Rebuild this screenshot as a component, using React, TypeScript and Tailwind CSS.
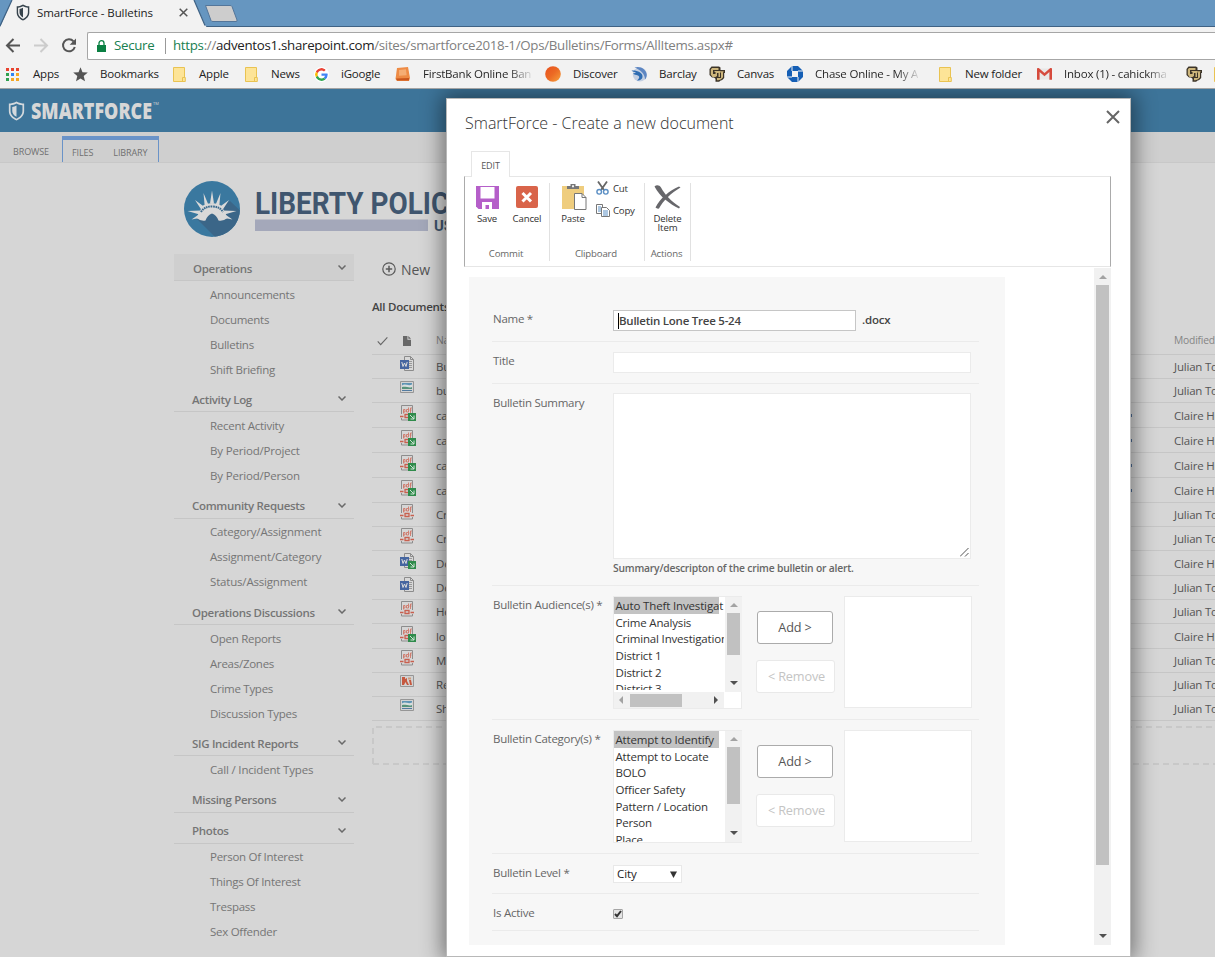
import React from "react";

const UI = "font-['Open_Sans','Noto_Sans',sans-serif]";

function Shield({ className, fill, bg }: { className: string; fill: string; bg: string }) {
  return (
    <svg viewBox="0 0 16 18" className={className} preserveAspectRatio="none">
      <path d="M8 .5C5.500 2 3 2.300 .8 2.300V9c0 4.200 3.200 6.800 7.200 8.600C12 15.800 15.200 13.200 15.200 9V2.300C13 2.300 10.500 2 8 .5z" fill={fill} />
      <path d="M8 2.300c-1.800 1-3.700 1.500-5.600 1.600V9c0 3.200 2.300 5.300 5.600 6.900 3.300-1.600 5.600-3.700 5.600-6.900V3.900C11.700 3.800 9.800 3.300 8 2.300z" fill={bg} />
      <path d="M8 4c-1.300.7-2.700 1.100-4 1.300V9c0 2.400 1.500 3.900 4 5.200z" fill={fill} />
    </svg>
  );
}

function Folder() {
  return (
    <svg viewBox="0 0 13 15" className="h-[15px] w-[13px]">
      <path d="M.5.5h11v10h.8v4H.5z" fill="#fde497" stroke="#e9c352" />
      <path d="M9.500 14v-3.500h2.500" fill="none" stroke="#e9c352" />
    </svg>
  );
}

function AppsGrid() {
  const colors = ["#e8432f", "#e8432f", "#e8432f", "#2fa14f", "#2e83f2", "#f5a623", "#2fa14f", "#f5a623", "#f5a623"];
  return (
    <div className="grid w-[13px] grid-cols-3 gap-[2px]">
      {colors.map((c, i) => (
        <div key={i} className="h-[3px] w-[3px]" style={{ background: c }} />
      ))}
    </div>
  );
}

function Buffalo() {
  return (
    <svg viewBox="0 0 16 16" className="h-4 w-4">
      <path d="M2.500.5h7.500l1.500 1v2.500H16v3h-.8v5l-2 2-2 .8-1 1H6.500v-3L5 11.500H3l-2.500-2.500V3z" fill="#3c3428" />
      <path d="M3 2h6.500v2H4v4h2.500V6H5.500V5H11v6H9.500V7H8v3L6.500 11H3.500L1.800 8.500V3.500zM8 12h4V6.500h-1V5.300h3.500v1H14v5L12.200 13.300 9.500 14.200H8z" fill="#cdb67c" />
    </svg>
  );
}

const GoogleG = () => (
  <svg viewBox="0 0 48 48" className="h-[15px] w-[15px] rounded-full bg-white p-[1px]">
    <path fill="#EA4335" d="M24 9.500c3.500 0 6.700 1.200 9.200 3.600l6.900-6.900C35.900 2.400 30.500 0 24 0 14.600 0 6.500 5.400 2.600 13.200l8 6.200C12.400 13.700 17.700 9.500 24 9.500z" />
    <path fill="#4285F4" d="M47 24.600c0-1.600-.2-3.100-.4-4.600H24v9h12.900c-.6 3-2.200 5.500-4.700 7.200l7.700 6C44.400 38 47 31.800 47 24.600z" />
    <path fill="#FBBC05" d="M10.500 28.600c-.5-1.500-.8-3-.8-4.600s.3-3.100.8-4.600l-8-6.200C.9 16.500 0 20.100 0 24s.9 7.500 2.600 10.800z" />
    <path fill="#34A853" d="M24 48c6.500 0 11.900-2.100 15.900-5.800l-7.700-6c-2.200 1.500-4.900 2.300-8.200 2.300-6.300 0-11.600-4.200-13.500-9.900l-8 6.200C6.500 42.600 14.600 48 24 48z" />
  </svg>
);

const Star = () => (
  <svg viewBox="0 0 15 15" className="h-[15px] w-[15px]">
    <path d="M7.500.3l2 4.900 5.300.4-4.100 3.400 1.300 5.200-4.500-2.800L3 14.200 4.300 9 .2 5.600l5.300-.4z" fill="#545454" />
  </svg>
);

const OrangeBook = () => (
  <svg viewBox="0 0 16 16" className="h-4 w-4">
    <path d="M2 2l11-1 2 11-1 3H2L.5 13z" fill="#ee8b45" />
    <path d="M1 12.500l13-.5v2.500H2z" fill="#c9561d" />
    <path d="M4 4l7-.7.6 6-7.600.4z" fill="#f5ad74" />
  </svg>
);

const Discover = () => (
  <svg viewBox="0 0 16 16" className="h-4 w-4">
    <defs>
      <linearGradient id="dg" x1="0" y1="0" x2="1" y2="1">
        <stop offset="0" stopColor="#e8501f" />
        <stop offset=".5" stopColor="#ec6a24" />
        <stop offset="1" stopColor="#f7a23c" />
      </linearGradient>
    </defs>
    <circle cx="8" cy="8" r="7.800" fill="url(#dg)" />
  </svg>
);

const Barclay = () => (
  <svg viewBox="0 0 16 16" className="h-4 w-4">
    <circle cx="8.800" cy="8.500" r="7" fill="#c3cfe2" />
    <path d="M3.500 1.500C9-.5 15.500 3 15.800 9c-.2 2-.8 3.500-1.800 4.500C14 8 10 4 3.500 1.500z" fill="#5d86c2" />
    <path d="M.5 4.500C6 4 12 6.500 11.500 11c-.3 2.500-3 4-5.500 3.500C8.500 12.500 9 10.500 7 9.500 5 9 3 8.500 2 7.500 3.500 7.300 4.500 7 5 6.500 3 6 1.500 5.500.5 4.500z" fill="#2f6db2" />
  </svg>
);

const Chase = () => (
  <svg viewBox="0 0 16 16" className="h-4 w-4">
    <path d="M5 0h6l5 5v6l-5 5H5l-5-5V5z" fill="#155fb5" />
    <path d="M5 5h6v6H5z" fill="#f2f2f2" />
    <path d="M5 0v5M16 5h-5M11 16v-5M0 11h5" stroke="#f2f2f2" strokeWidth="1" />
  </svg>
);

const Gmail = () => (
  <svg viewBox="0 0 15 12" className="h-3 w-[15px]">
    <path d="M1 .5h13v11H1z" fill="#e9e7e6" />
    <path d="M0 1c0-1 1-1 2-.8L7.500 5 13 .2c1-.2 2-.2 2 .8v10.700h-2.600V4L7.500 8.300 2.600 4v7.700H0z" fill="#d64a3c" />
  </svg>
);

const bookmarks: { w: string; pad: string; icon: React.ReactNode; label: string; fade?: boolean }[] = [
  { w: "w-[67px]", pad: "w-[27px]", icon: <AppsGrid />, label: "Apps" },
  { w: "w-[100px]", pad: "w-[27px]", icon: <Star />, label: "Bookmarks" },
  { w: "w-[72px]", pad: "w-[26px]", icon: <Folder />, label: "Apple" },
  { w: "w-[69px]", pad: "w-[26px]", icon: <Folder />, label: "News" },
  { w: "w-[81px]", pad: "w-[27px]", icon: <GoogleG />, label: "iGoogle" },
  { w: "w-[150px]", pad: "w-[28px]", icon: <OrangeBook />, label: "FirstBank Online Ban", fade: true },
  { w: "w-[86px]", pad: "w-[28px]", icon: <Discover />, label: "Discover" },
  { w: "w-[78px]", pad: "w-[28px]", icon: <Barclay />, label: "Barclay" },
  { w: "w-[78px]", pad: "w-[28px]", icon: <Buffalo />, label: "Canvas" },
  { w: "w-[152px]", pad: "w-[28px]", icon: <Chase />, label: "Chase Online - My A", fade: true },
  { w: "w-[98px]", pad: "w-[26px]", icon: <Folder />, label: "New folder" },
  { w: "w-[149px]", pad: "w-[27px]", icon: <Gmail />, label: "Inbox (1) - cahickma", fade: true },
  { w: "w-[28px]", pad: "w-[28px]", icon: <Buffalo />, label: "" },
  { w: "w-[20px]", pad: "w-[20px]", icon: <Folder />, label: "" },
];

function Chrome() {
  return (
    <header className="h-[89px] shrink-0 border-b border-[#a3a3a3] bg-[#f2f2f2]">
      <div className="relative h-[27px] border-b border-[#3f6284] bg-[#6696c0]">
        <svg viewBox="0 0 250 27" className="absolute left-0 top-0 h-[27px] w-[250px]">
          <path d="M0 27L1 25 12 0h182l11 25 1.500 2z" fill="#f2f2f2" />
          <path d="M0 26L12 0M194 0l11 25.500" fill="none" stroke="#3f6284" strokeWidth="1.200" />
          <path d="M205.500 5.500h24.500q1.500 0 2 1l5 13.500q.5 1.500-1 1.500h-23q-1.500 0-2-1l-5.500-15z" fill="#cdcdcd" stroke="#54769a" />
        </svg>
        <div className="relative flex h-[25px] items-center pl-4">
          <Shield className="h-[17px] w-[14px]" fill="#36434c" bg="#f2f2f2" />
          <span className="ml-[7px] w-[142px] text-[11.5px] tracking-[-0.08px] text-[#222]">SmartForce - Bulletins</span>
          <svg viewBox="0 0 9 9" className="h-[9px] w-[9px]" stroke="#555" strokeWidth="1.500">
            <path d="M.7.7l7.600 7.600M8.300.7L.7 8.300" />
          </svg>
        </div>
      </div>
      <div className="flex h-[37px] items-center">
        <svg viewBox="0 0 87 29" className="h-[29px] w-[87px] shrink-0" fill="none" strokeWidth="2">
          <path d="M20 14.500H7.500M13.500 8l-6.500 6.500 6.500 6.500" stroke="#555" />
          <path d="M34 14.500h12.500M40.500 8l6.500 6.500-6.500 6.500" stroke="#ccc" />
          <path d="M73.500 10.300a6 6 0 1 0 1.300 5.700" stroke="#555" />
          <path d="M76 7.500v6.300h-6.300z" fill="#555" />
        </svg>
        <div className="flex h-[28px] flex-1 items-center rounded-l-[2px] border border-r-0 border-[#a6a6a6] bg-white">
          <svg viewBox="0 0 9 12" className="ml-[9px] h-3 w-[9px]">
            <path d="M0 5h9v7H0z" fill="#0b8043" />
            <path d="M2 5V3a2.500 2.300 0 0 1 5 0v2" fill="none" stroke="#0b8043" strokeWidth="1.300" />
          </svg>
          <span className="ml-[8px] w-[51px] text-[13.3px] tracking-[-0.3px] text-[#188050]">Secure</span>
          <span className="h-4 w-px bg-[#999]" />
          <span className="ml-[7px] whitespace-nowrap text-[13.3px] tracking-[-0.295px] text-[#808080]">
            <span className="text-[#188050]">https</span>://<span className="text-[#222]">adventos1.sharepoint.com</span>/sites/smartforce2018-1/Ops/Bulletins/Forms/AllItems.aspx#
          </span>
        </div>
      </div>
      <div className="flex h-[20px] items-center overflow-hidden pl-[6px]">
        {bookmarks.map((b, i) => (
          <div key={i} className={`flex shrink-0 items-center ${b.w}`}>
            <div className={`shrink-0 ${b.pad}`}>{b.icon}</div>
            <span
              className={`whitespace-nowrap text-[11.5px] tracking-[-0.2px] text-[#222] ${
                b.fade ? "bg-[linear-gradient(90deg,#222_80%,#2222_100%)] bg-clip-text text-transparent" : ""
              }`}
            >
              {b.label}
            </span>
          </div>
        ))}
      </div>
    </header>
  );
}

const nav = [
  { t: "Operations", h: "h-[27px] bg-[#cfcfcf] pl-[19px]", list: "pt-px", items: ["Announcements", "Documents", "Bulletins", "Shift Briefing"] },
  { t: "Activity Log", h: "h-[30px] pl-[18px]", list: "pt-px", items: ["Recent Activity", "By Period/Project", "By Period/Person"] },
  { t: "Community Requests", h: "h-[31px] pl-[18px]", list: "pb-px", items: ["Category/Assignment", "Assignment/Category", "Status/Assignment"] },
  { t: "Operations Discussions", h: "h-[30px] pl-[18px]", list: "pt-px", items: ["Open Reports", "Areas/Zones", "Crime Types", "Discussion Types"] },
  { t: "SIG Incident Reports", h: "h-[30px] pl-[18px]", list: "pt-px", items: ["Call / Incident Types"] },
  { t: "Missing Persons", h: "h-[31px] pl-[18px]", list: "", items: [] },
  { t: "Photos", h: "h-[31px] pl-[18px]", list: "", items: ["Person Of Interest", "Things Of Interest", "Trespass", "Sex Offender"] },
];

function Sidebar() {
  return (
    <nav className="w-[180px] shrink-0 text-[#757575]">
      {nav.map((s) => (
        <section key={s.t}>
          <div className={`flex items-end justify-between border-b border-[#c6c6c6] pr-2 ${s.h}`}>
            <span className={`text-[11.5px] font-semibold leading-[18px] tracking-[-0.32px] ${s.h.startsWith("h-[31px]") ? "pb-[3px]" : "pb-[2px]"}`}>{s.t}</span>
            <svg viewBox="0 0 8 5" className="mb-[10px] h-[5px] w-2" fill="none" stroke="#6a6a6a" strokeWidth="1.500">
              <path d="M.5.5L4 4 7.500.5" />
            </svg>
          </div>
          {s.items.length > 0 && (
            <ul className={s.list}>
              {s.items.map((i) => (
                <li key={i} className={`h-[25px] pl-9 text-[11.5px] leading-[25px] ${i.includes("/") && i !== "Areas/Zones" ? "tracking-[-0.18px]" : "tracking-[-0.27px]"}`}>{i}</li>
              ))}
            </ul>
          )}
        </section>
      ))}
    </nav>
  );
}

function FileIcon({ kind }: { kind: string }) {
  const shared = kind.endsWith("+");
  const k = kind.replace("+", "");
  return (
    <svg viewBox="0 0 16 16" className="h-4 w-4">
      {k === "pdf" && (
        <g fill="none">
          <path d="M1.500 9V.5h11V9M1.500 13v2h11v-2" stroke="#8d8d8d" />
          <path d="M3.500 8.500V4.500h1.500V7H3.500M8.500 2.500V7H6.500V4.500H8M10.500 8V3h1.500M9.500 5h2" stroke="#cf7668" strokeWidth=".9" />
          <path d="M0 11.500h3.500M5 9.500h4v3H5zM10.500 11.500h3.500" stroke="#c8604f" strokeWidth="1.300" />
        </g>
      )}
      {k === "word" && (
        <g>
          <path d="M4.500.5h6l3 3v11h-9z" fill="#d8d8d8" stroke="#8c8c8c" />
          <path d="M10.500.5v3h3" fill="none" stroke="#8c8c8c" />
          <path d="M9 5.500h3M9 7.500h3M9 9.500h3M9 11.500h3" stroke="#999" />
          <path d="M0 4h9v9H0z" fill="#4565a0" />
          <path d="M1.800 6l1.200 4.500L4.500 7 6 10.500 7.200 6" fill="none" stroke="#dcdcdc" />
        </g>
      )}
      {k === "img" && (
        <g>
          <path d="M.5 1.500h13v11H.5z" fill="#d2d2d2" stroke="#969696" />
          <path d="M2 3h10v4H2z" fill="#5f94b4" />
          <path d="M2 5.500c3-2.500 6 1 10-1v4H2z" fill="#d8dede" />
          <path d="M2 7c4-1 7 1.500 10 0v2H2z" fill="#57927a" />
          <path d="M2 10.500h10" stroke="#527ba0" />
        </g>
      )}
      {k === "ppt" && (
        <g>
          <path d="M.5 1.500h13v11H.5z" fill="#d2d2d2" stroke="#969696" />
          <path d="M2 3h3v2l2-1v3l2 4H7L5.500 8 4 11H2z" fill="#c5583f" />
          <path d="M8 3.500h3v2H8z" fill="#cf9b7c" />
          <path d="M9 6h2l1 5h-2z" fill="#c5583f" />
        </g>
      )}
      {shared && (
        <g>
          <path d="M8 8h8v8H8z" fill="#2f8b4b" />
          <path d="M10 10l4 4M14 10.500V14h-3.500" stroke="#cfe3d5" fill="none" />
        </g>
      )}
    </svg>
  );
}

const J = "Julian Torres";
const C = "Claire Hickman";
const files: [string, string, string, string][] = [
  ["h-[24px]", "word", "Bulletin", J],
  ["h-[24px]", "img", "bulletin", J],
  ["h-[25px]", "pdf+", "case", C],
  ["h-[25px]", "pdf+", "case", C],
  ["h-[25px]", "pdf+", "case", C],
  ["h-[25px]", "pdf+", "case", C],
  ["h-[24px]", "pdf", "Crime", J],
  ["h-[24px]", "pdf", "Crime", J],
  ["h-[25px]", "word+", "Document", C],
  ["h-[24px]", "word", "Document", J],
  ["h-[24px]", "pdf", "Homes", J],
  ["h-[25px]", "pdf+", "lone", C],
  ["h-[24px]", "pdf", "Memo", J],
  ["h-[24px]", "ppt", "Report", J],
  ["h-[24px]", "img", "Shift", J],
];

function Library() {
  return (
    <main className="ml-[18px] w-[843px] shrink-0">
      <div className="flex h-[30px] items-center gap-[5px] pl-[10px] text-[14px] tracking-[-0.1px] text-[#555]">
        <svg viewBox="0 0 14 14" className="h-[14px] w-[14px]" fill="none" stroke="#5a5a5a" strokeWidth="1.200">
          <circle cx="7" cy="7" r="6.200" />
          <path d="M7 3.800v6.400M3.800 7h6.400" strokeWidth="1.500" />
        </svg>
        New
      </div>
      <div className="flex h-[43px] items-center whitespace-nowrap pt-[2px] text-[11.500px] font-semibold tracking-[-0.25px] text-[#444]">All Documents</div>
      <div className="flex h-[28px] items-center border-b border-[#c6c6c6] text-[10.3px] text-[#858585]">
        <svg viewBox="0 0 12 10" className="ml-[5px] h-[10px] w-[11px]" fill="none" stroke="#666" strokeWidth="1.200">
          <path d="M.8 5.500L4 9l7.300-8" />
        </svg>
        <svg viewBox="0 0 9 11" className="ml-[15px] h-[10px] w-[8px]">
          <path d="M0 0h5v4h4v7H0zM6 0l3 3H6z" fill="#686868" />
        </svg>
        <span className="ml-[25px] w-[738px] shrink-0 tracking-[-0.2px]">Name</span>
        <span className="shrink-0 tracking-[-0.2px]">Modified</span>
      </div>
      {files.map(([h, kind, name, by], i) => (
        <div key={i} className={`flex items-center whitespace-nowrap border-b border-[#c6c6c6] text-[11.5px] tracking-[-0.2px] text-[#555] ${h}`}>
          <span className="mb-[5px] ml-[28px] w-[36px] shrink-0">
            <FileIcon kind={kind} />
          </span>
          <span className="w-[695px] shrink-0 pt-px">{name}</span>
          <span className={`h-[3px] w-[1px] shrink-0 ${kind === "pdf+" && i < 6 ? "bg-[#4a6a94]" : ""}`} />
          <span className="ml-[42px] shrink-0 pt-px">{by}</span>
        </div>
      ))}
      <svg className="mt-[5px] h-[39px] w-full" viewBox="0 0 843 39">
        <path d="M1 38V1h842M1 38h842" fill="none" stroke="#c8c8c8" strokeWidth="2" strokeDasharray="6 4" />
      </svg>
    </main>
  );
}

function LibertyLogo() {
  return (
    <svg viewBox="0 0 300 58" className="ml-[183px] h-[58px] w-[300px]">
      <defs>
        <clipPath id="disc"><circle cx="29" cy="28" r="28" /></clipPath>
      </defs>
      <circle cx="29" cy="28" r="28" fill="#3a789f" />
      <g clipPath="url(#disc)">
        <path d="M14 38l20 20h30V36L47 20 29 31z" fill="#3b6688" />
      </g>
      <g fill="#d9d9d9">
        <path d="M29 9.500l2 13h-4zM20.500 12l4.800 11.500-3.600 1.500zM37.500 12l-4.800 11.500 3.600 1.500zM12 19l9.500 7-3 3zM46 19l-9.500 7 3 3zM4.500 30l13.500-.5-1.500 4zM53.500 30l-13.500-.5 1.500 4zM8.500 38.500l8-5.500v4zM49.500 38.500l-8-5.500v4z" />
        <path d="M20 24.500q9-5 18 0l3.500 6 3 6.500q-4.500 3.500-9 2.500-2-5.500-6.500-7-4.500 1.500-6.500 7-4.500 1-9-2.500l3-6.500z" />
      </g>
      <path d="M18 31q3-5.500 11-5.500t11 5.500" fill="none" stroke="#3a6a8e" strokeWidth="2" strokeDasharray="1.600 .7" />
      <text x="72" y="33" fontFamily="Roboto" fontWeight="700" fontSize="32" fill="#40566f" textLength="210" lengthAdjust="spacingAndGlyphs">LIBERTY POLICE</text>
      <path d="M72 38.500h173v11.500H72z" fill="#a4a8ba" />
      <text x="251" y="50" fontFamily="Roboto" fontWeight="700" fontSize="15.500" fill="#40566f" textLength="29" lengthAdjust="spacingAndGlyphs">USA</text>
    </svg>
  );
}

function RibbonButton({ icon, label, className }: { icon: React.ReactNode; label: React.ReactNode; className: string }) {
  return (
    <div className={`flex flex-col items-center text-center text-[9.6px] leading-[9px] tracking-[-0.15px] text-[#333] ${className}`}>
      <div className="flex h-[28px] items-center">{icon}</div>
      <div className="pt-[3px]">{label}</div>
    </div>
  );
}

function RibbonGroup({ w, label, children }: { w: string; label: string; children: React.ReactNode }) {
  return (
    <div className={`flex h-[78px] flex-col justify-between border-r border-[#e1e1e1] ${w}`}>
      <div className="flex">{children}</div>
      <div className="pb-px pr-[2px] text-center text-[9.6px] leading-[12px] tracking-[-0.15px] text-[#666]">{label}</div>
    </div>
  );
}

function Ribbon() {
  return (
    <div className="mt-[9px]">
      <div className="relative z-10 ml-[7px] flex h-[26px] w-[39px] items-center justify-center border border-b-0 border-[#e6e6e6] bg-white pt-[2px] text-[9px] tracking-[-0.1px] text-[#555]">EDIT</div>
      <div className="-mt-px flex h-[91px] items-start border border-x-[#ababab] border-y-[#e6e6e6] pt-[6px]">
        <RibbonGroup w="w-[85px]" label="Commit">
          <RibbonButton
            className="ml-[6px] w-[32px]"
            label="Save"
            icon={
              <svg viewBox="0 0 23 23" className="h-[23px] w-[23px]">
                <path d="M0 0h23v23H2.500L0 20.500z" fill="#b55fc9" />
                <path d="M4.500 1h14v11.500h-14zM6 16h10v7h-3v-4H9.500v4H6z" fill="#fff" />
              </svg>
            }
          />
          <RibbonButton
            className="ml-[6px] w-[36px]"
            label="Cancel"
            icon={
              <svg viewBox="0 0 22 22" className="h-[22px] w-[22px]">
                <rect width="22" height="22" rx="2" fill="#d9644a" />
                <path d="M6.500 7l8.500 8.500M15 7l-8.500 8.500" stroke="#fff" strokeWidth="3" />
              </svg>
            }
          />
        </RibbonGroup>
        <RibbonGroup w="w-[95px]" label="Clipboard">
          <RibbonButton
            className="ml-[9px] w-[28px]"
            label="Paste"
            icon={
              <svg viewBox="0 0 26 28" className="-mr-[2px] h-[28px] w-[26px] shrink-0">
                <path d="M1 3h22v23H1z" fill="#efcd7e" />
                <path d="M6 6V3h3.500V1h5v2H18v3z" fill="#777" />
                <path d="M11 2.300h2v2h-2z" fill="#eee" />
                <path d="M13.500 10.500h7.500l4 4v12H13.500z" fill="#fff" stroke="#777" />
                <path d="M21 10.500v4h4" fill="none" stroke="#777" />
              </svg>
            }
          />
          <div className="ml-[9px] flex flex-col gap-[9px] whitespace-nowrap text-[9.7px] leading-[13px] tracking-[-0.25px] text-[#333]">
            <div className="-mt-[2px] flex items-center gap-[4px]">
              <svg viewBox="0 0 13 14" className="h-[14px] w-[13px]" fill="none">
                <path d="M2 .5l6 8.500M11 .5L5 9" stroke="#666" strokeWidth="1.800" />
                <circle cx="3.200" cy="10.800" r="2.300" stroke="#5b8fc4" strokeWidth="1.400" />
                <circle cx="9.800" cy="10.800" r="2.300" stroke="#5b8fc4" strokeWidth="1.400" />
              </svg>
              Cut
            </div>
            <div className="flex items-center gap-[3px]">
              <svg viewBox="0 0 14 13" className="h-[13px] w-[14px]">
                <path d="M.5.5h6v9h-6z" fill="#fff" stroke="#777" />
                <path d="M5.500 3.500h5l3 3v6h-8z" fill="#fff" stroke="#777" />
                <path d="M2 3h3M2 5h3M2 7h3M7 7h5M7 9h5M7 11h5" stroke="#5b8fc4" />
              </svg>
              Copy
            </div>
          </div>
        </RibbonGroup>
        <RibbonGroup w="w-[46px]" label="Actions">
          <RibbonButton
            className="w-[46px]"
            label={
              <>
                <div>Delete</div>
                <div>Item</div>
              </>
            }
            icon={
              <svg viewBox="0 0 27 24" className="h-6 w-[27px]">
                <path d="M.5 1.500C2.500-.5 5.500 0 7 2.500 11 10 17 16 26 22l-1 1.500C16 19 6 12 .5 1.500z" fill="#67676b" />
                <path d="M25 1.500l1.500 1C17 8 9 16 5 23.500q-2 .5-3.500-1C6.500 13 15 6 25 1.500z" fill="#67676b" />
              </svg>
            }
          />
        </RibbonGroup>
      </div>
    </div>
  );
}

function Field({ label, h, children }: { label: string; h: string; children: React.ReactNode }) {
  return (
    <div className={`flex border-b border-[#ebebeb] ${h}`}>
      <div className="w-[121px] shrink-0 pl-px pt-[10px] text-[11.5px] leading-[18px] tracking-[-0.26px] text-[#666]">{label}</div>
      {children}
    </div>
  );
}

function Tri({ dir, color }: { dir: "up" | "down" | "left" | "right"; color: string }) {
  const d = { up: "M0 6l4-4 4 4z", down: "M0 2l4 4 4-4z", left: "M6 0L2 4l4 4z", right: "M2 0l4 4-4 4z" }[dir];
  return (
    <svg viewBox="0 0 8 8" className="h-2 w-2">
      <path d={d} fill={color} />
    </svg>
  );
}

function ListBox({ items, horizontal }: { items: string[]; horizontal?: boolean }) {
  return (
    <div className="mt-[10px] h-[113px] w-[129px] shrink-0 border border-[#ebebeb] bg-white">
      <div className={`flex ${horizontal ? "h-[95px]" : "h-[111px]"}`}>
        <div className={`mr-px w-[110px] shrink-0 overflow-hidden ${horizontal ? "h-[93px]" : ""}`}>
          {items.map((t, i) => (
            <div
              key={t}
              className={`h-[16.7px] whitespace-nowrap pl-[1.5px] text-[11.5px] leading-[17px] text-[#333] ${i === 0 ? "w-[105px] bg-[#c3c3c3] tracking-[-0.15px]" : "tracking-[-0.18px]"}`}
            >
              {t}
            </div>
          ))}
        </div>
        <div className="flex w-[17px] shrink-0 flex-col items-center justify-between bg-[#f1f1f1] pb-[5px] pt-[4px]">
          <div className="flex flex-col items-center gap-[4px]">
            <Tri dir="up" color="#a3a3a3" />
            <div className={`w-[13px] bg-[#c1c1c1] ${horizontal ? "h-[42px]" : "h-[57px]"}`} />
          </div>
          <Tri dir="down" color="#505050" />
        </div>
      </div>
      {horizontal && (
        <div className="flex h-[16px] w-[110px] items-center justify-between bg-[#f1f1f1] pl-[3px] pr-[4px]">
          <div className="flex items-center gap-[5px]">
            <Tri dir="left" color="#a3a3a3" />
            <div className="h-[13px] w-[52px] bg-[#c1c1c1]" />
          </div>
          <Tri dir="right" color="#505050" />
        </div>
      )}
    </div>
  );
}

function Picker({ items, horizontal }: { items: string[]; horizontal?: boolean }) {
  return (
    <>
      <ListBox items={items} horizontal={horizontal} />
      <div className="ml-[14px] mt-[25px] flex w-[79px] shrink-0 flex-col gap-4 text-[12.7px] tracking-[-0.15px]">
        <div className="ml-px flex h-[33px] w-[76px] items-center justify-center rounded-[3px] border border-[#ababab] bg-white text-[#555]">Add &gt;</div>
        <div className="flex h-[33px] w-[79px] items-center justify-center rounded-[3px] border border-[#e9e9e9] bg-white pl-[2px] text-[#c4c4c4]">&lt; Remove</div>
      </div>
      <div className="ml-[9px] mt-[10px] h-[112px] w-[128px] shrink-0 border border-[#ebebeb] bg-white" />
    </>
  );
}

function Dialog() {
  return (
    <div className="absolute left-[446px] top-[9px] flex h-[859px] w-[685px] flex-col border border-[#b8b8b8] bg-white pl-[17px] pr-[19px] shadow-[0_0_20px_4px_rgba(0,0,0,0.45)]">
      <div className="flex h-[43px] items-start justify-between pt-[10px]">
        <h1 className="pl-px pt-[2px] text-[16px] font-light leading-[24px] tracking-[0.01px] text-[#333]">SmartForce - Create a new document</h1>
        <svg viewBox="0 0 14 14" className="-mr-[9px] mt-[1px] h-[14px] w-[14px]" stroke="#666" strokeWidth="2">
          <path d="M1 1l12 12M13 1L1 13" />
        </svg>
      </div>
      <Ribbon />
      <div className="flex">
        <div className="ml-[5px] mt-[10px] h-[668px] w-[536px] bg-[#f7f7f7] pl-[23px] pr-[26px] pt-[23px]">
          <Field label="Name *" h="h-[42px]">
            <div className="mt-[10px] flex h-[21px] w-[243px] items-center border border-[#c6c6c6] bg-white pl-[4px] text-[11.5px] font-semibold tracking-[-0.24px] text-[#444]">
              <span className="h-[16px] w-px bg-black" />
              Bulletin Lone Tree 5-24
            </div>
            <span className="ml-[6px] pt-[11px] text-[11.5px] font-semibold leading-[18px] tracking-[-0.2px] text-[#444]">.docx</span>
          </Field>
          <Field label="Title" h="h-[42px]">
            <div className="mt-[10px] h-[21px] w-[358px] border border-[#ebebeb] bg-white" />
          </Field>
          <Field label="Bulletin Summary" h="h-[202px]">
            <div className="pt-[9px]">
              <div className="flex h-[166px] w-[358px] items-end justify-end border border-[#ebebeb] bg-white p-[1px]">
                <svg viewBox="0 0 9 9" className="h-[9px] w-[9px]" stroke="#555" strokeWidth="1">
                  <path d="M0 8.500L8.500 0M5 8.500L8.500 5" />
                </svg>
              </div>
              <div className="text-[10.3px] font-semibold leading-[19px] tracking-[-0.2px] text-[#666]">Summary/descripton of the crime bulletin or alert.</div>
            </div>
          </Field>
          <Field label="Bulletin Audience(s) *" h="h-[134px]">
            <Picker horizontal items={["Auto Theft Investigat", "Crime Analysis", "Criminal Investigation", "District 1", "District 2", "District 3"]} />
          </Field>
          <Field label="Bulletin Category(s) *" h="h-[134px]">
            <Picker items={["Attempt to Identify", "Attempt to Locate", "BOLO", "Officer Safety", "Pattern / Location", "Person", "Place"]} />
          </Field>
          <Field label="Bulletin Level *" h="h-[40px]">
            <div className="mt-[11px] flex h-[18px] w-[69px] items-center justify-between border border-[#e8e8e8] bg-white pl-[3px] pr-[4px] text-[11.5px] tracking-[-0.1px] text-[#222]">
              City
              <svg viewBox="0 0 7 7" className="h-[7px] w-[7px]">
                <path d="M0 .5h7L3.500 7z" fill="#333" />
              </svg>
            </div>
          </Field>
          <Field label="Is Active" h="h-[37px]">
            <div className="mt-[15px] flex h-[10px] w-[10px] items-center justify-center rounded-[1px] border border-[#a5a5a5] bg-[#e4e4e4]">
              <svg viewBox="0 0 8 8" className="h-2 w-2 shrink-0" fill="none" stroke="#333" strokeWidth="2">
                <path d="M1 4l2 2.200L7 1" />
              </svg>
            </div>
          </Field>
        </div>
        <div className="ml-[89px] mt-px flex h-[677px] w-[17px] flex-col items-center justify-between bg-[#f1f1f1] pb-[5px] pt-[5px]">
          <div className="flex flex-col items-center gap-[4px]">
            <Tri dir="up" color="#a3a3a3" />
            <div className="h-[580px] w-[13px] bg-[#c1c1c1]" />
          </div>
          <Tri dir="down" color="#505050" />
        </div>
      </div>
    </div>
  );
}

export default function App() {
  return (
    <div className={`flex h-[957px] w-[1215px] flex-col overflow-hidden bg-[#d6d6d6] ${UI}`}>
      <Chrome />
      <div className="relative flex-1 overflow-hidden">
        <div className="flex h-[43px] items-center bg-[#3d7499] pl-2">
          <Shield className="h-[20px] w-[17px]" fill="#d4d9dd" bg="#3d7499" />
          <svg viewBox="0 0 130 24" className="ml-[6px] h-6 w-[130px]">
            <text x="0" y="20" fontFamily="Open Sans" fontWeight="800" fontSize="23" fill="#d7d7d7" textLength="121" lengthAdjust="spacingAndGlyphs">SMARTFORCE</text>
            <text x="122" y="6" fontFamily="Open Sans" fontSize="4" fill="#d7d7d7">TM</text>
          </svg>
        </div>
        <div className="flex h-[31px] items-end border-b border-[#c8c8c8] bg-[#cfcfcf] text-[9px] tracking-[-0.1px] text-[#707070]">
          <span className="w-[62px] pb-[4px] pl-[13px]">BROWSE</span>
          <div className="flex h-[26px] w-[97px] items-center gap-[20px] border border-b-0 border-t-4 border-[#6a93c8] pl-[9px] pt-[3px]">
            <span>FILES</span>
            <span>LIBRARY</span>
          </div>
        </div>
        <div className="pt-[18px]">
          <LibertyLogo />
          <div className="flex pl-[174px] pt-[15px]">
            <Sidebar />
            <Library />
          </div>
        </div>
        <Dialog />
      </div>
    </div>
  );
}
